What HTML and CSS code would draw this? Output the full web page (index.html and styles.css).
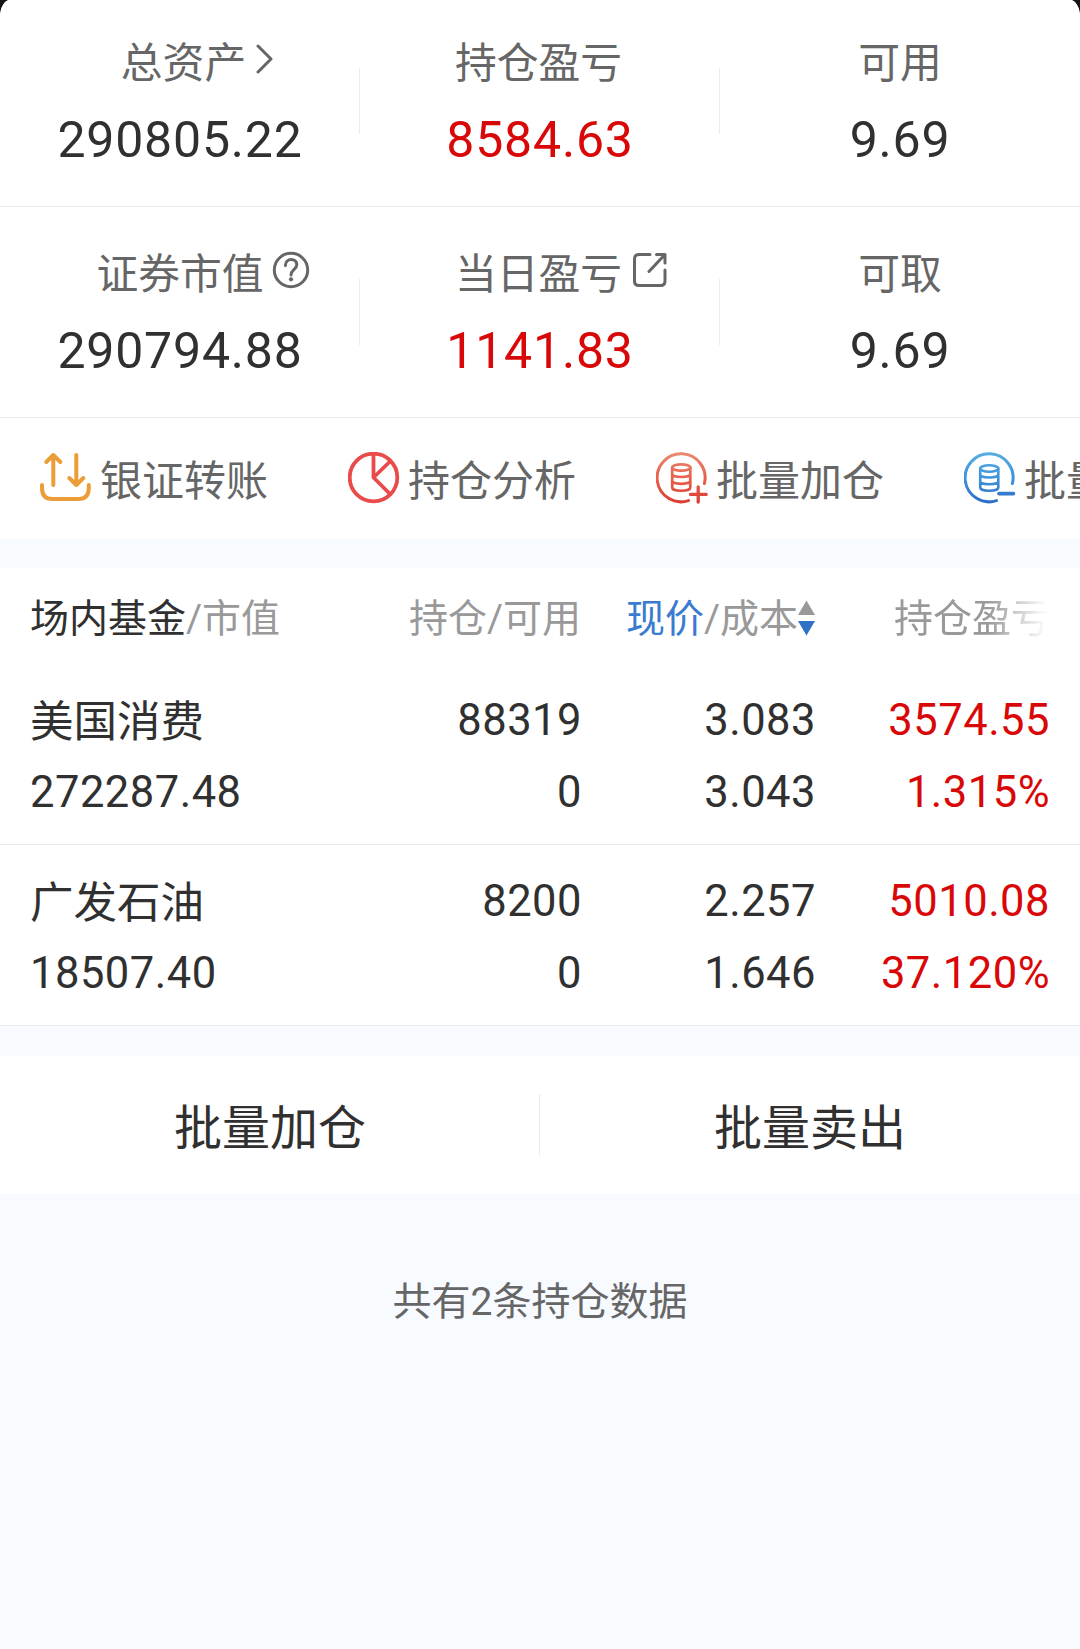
FILE: index.html
```
<!DOCTYPE html>
<html lang="zh-CN">
<head>
    <meta charset="UTF-8">
    <meta name="viewport" content="width=device-width, initial-scale=1.0">
    <title>持仓</title>
    <link rel="stylesheet" href="styles.css">
</head>
<body>

    <div class="page">

        <!-- Account summary -->
        <div class="summary">
            <div class="summary-row first">
                <div class="cell">
                    <div class="label label-total">总资产
                        <svg class="icon-chevron" width="18" height="30" viewBox="0 0 18 30"><path d="M2 2L15 15L2 28"/></svg>
                    </div>
                    <div class="value">290805.22</div>
                </div>
                <div class="cell">
                    <div class="label">持仓盈亏</div>
                    <div class="value red">8584.63</div>
                </div>
                <div class="cell">
                    <div class="label">可用</div>
                    <div class="value">9.69</div>
                </div>
            </div>
            <div class="summary-row">
                <div class="cell">
                    <div class="label">证券市值
                        <svg class="icon-help" width="38" height="38" viewBox="0 0 38 38">
                            <circle cx="19" cy="19" r="16.7"/>
                            <path d="M13.4 14.5C13.4 6.5 24.8 6.5 24.8 13.8C24.8 18.2 19 18.6 19 24"/>
                            <circle class="dot" cx="19" cy="28.3" r="2.1"/>
                        </svg>
                    </div>
                    <div class="value">290794.88</div>
                </div>
                <div class="cell">
                    <div class="label">当日盈亏
                        <svg class="icon-link" width="36" height="36" viewBox="0 0 36 36">
                            <path d="M18 2.5H7Q2.5 2.5 2.5 7V29Q2.5 33.5 7 33.5H28.5Q33 33.5 33 29V18"/>
                            <path d="M17 19.5L32.5 3M24.5 2.5H33V11"/>
                        </svg>
                    </div>
                    <div class="value red">1141.83</div>
                </div>
                <div class="cell">
                    <div class="label">可取</div>
                    <div class="value">9.69</div>
                </div>
            </div>
        </div>

        <!-- Shortcuts -->
        <div class="shortcuts">
            <div class="shortcut">
                <svg class="transfer" width="52" height="52" viewBox="0.7 0 52 52">
                    <path d="M14 3V33M7 10L14 3L21 10"/>
                    <path d="M37 3V33M30 26L37 33L44 26"/>
                    <path d="M2.7 33V36Q2.7 47 13 47H39Q49.5 47 49.5 36V33"/>
                </svg>
                <span>银证转账</span>
            </div>
            <div class="shortcut">
                <svg class="analysis" width="52" height="52" viewBox="0 0 52 52">
                    <circle cx="25.5" cy="25.5" r="23.8"/>
                    <path d="M25.5 2V25.5L42 42M25.5 25.5L42 9.5"/>
                </svg>
                <span>持仓分析</span>
            </div>
            <div class="shortcut">
                <svg width="52" height="52" viewBox="0 0 52 52" fill="none" stroke="url(#gradRed)" stroke-width="3" stroke-linecap="round">
                    <defs>
                        <linearGradient id="gradRed" gradientUnits="userSpaceOnUse" x1="0" y1="0" x2="0" y2="52">
                            <stop offset="0" stop-color="#e98a72"/>
                            <stop offset="0.5" stop-color="#e8604c"/>
                            <stop offset="1" stop-color="#d93c30"/>
                        </linearGradient>
                    </defs>
                    <path d="M48.4 31.5A24 24 0 1 0 32.5 48.6"/>
                    <path stroke-width="2.7" d="M16.2 15.5V35.5C16.2 39.8 34.3 39.8 34.3 35.5V15.5M16.2 22C16.2 26 34.3 26 34.3 22M16.2 28.8C16.2 32.8 34.3 32.8 34.3 28.8"/>
                    <ellipse stroke-width="2.7" cx="25.25" cy="15.5" rx="9.05" ry="3.2"/>
                    <path stroke-width="3.3" d="M42.2 34.8V50M34.5 42.4H50.2"/>
                </svg>
                <span>批量加仓</span>
            </div>
            <div class="shortcut">
                <svg width="52" height="52" viewBox="0 0 52 52" fill="none" stroke="url(#gradBlue)" stroke-width="3" stroke-linecap="round">
                    <defs>
                        <linearGradient id="gradBlue" gradientUnits="userSpaceOnUse" x1="0" y1="0" x2="0" y2="52">
                            <stop offset="0" stop-color="#55aee2"/>
                            <stop offset="0.5" stop-color="#3f92dc"/>
                            <stop offset="1" stop-color="#2c6cc6"/>
                        </linearGradient>
                    </defs>
                    <path d="M48.4 31.5A24 24 0 1 0 32.5 48.6"/>
                    <path stroke-width="2.6" d="M16.2 16.5V35.5C16.2 39.8 34.3 39.8 34.3 35.5V16.5M16.2 22.5C16.2 26.5 34.3 26.5 34.3 22.5M16.2 29.3C16.2 33.3 34.3 33.3 34.3 29.3"/>
                    <ellipse stroke-width="2.6" cx="25.25" cy="16.5" rx="9.05" ry="3.2"/>
                    <path stroke-width="3.8" d="M35 41.6L49.4 41.59"/>
                </svg>
                <span>批量卖出</span>
            </div>
        </div>

        <!-- Holdings -->
        <div class="holdings">
            <div class="table-head">
                <div class="col"><span class="dark">场内基金</span>/市值</div>
                <div class="col">持仓/可用</div>
                <div class="col sort">
                    <span class="blue">现价</span>/成本
                    <svg width="17" height="36" viewBox="0 0 17 36">
                        <path fill="#999999" d="M8.5 0.5L17 15H0Z"/>
                        <path fill="#2f72c4" d="M0 21H17L8.5 35.5Z"/>
                    </svg>
                </div>
                <div class="col fade">持仓盈亏</div>
            </div>
            <div class="holding">
                <div class="col"><p class="name">美国消费</p><p>272287.48</p></div>
                <div class="col"><p>88319</p><p>0</p></div>
                <div class="col"><p>3.083</p><p>3.043</p></div>
                <div class="col red"><p>3574.55</p><p>1.315%</p></div>
            </div>
            <div class="holding">
                <div class="col"><p class="name">广发石油</p><p>18507.40</p></div>
                <div class="col"><p>8200</p><p>0</p></div>
                <div class="col"><p>2.257</p><p>1.646</p></div>
                <div class="col red"><p>5010.08</p><p>37.120%</p></div>
            </div>
        </div>

        <!-- Batch buttons -->
        <div class="actions">
            <button class="btn">批量加仓</button>
            <button class="btn">批量卖出</button>
        </div>

        <p class="footer">共有2条持仓数据</p>

    </div>

</body>
</html>
```
FILE: styles.css
```
:root {
    --page-bg: #f7faff;
    --line: #ebebeb;
    --text: #303030;
    --label: #666666;
    --muted: #999999;
    --red: #d90808;
    --blue: #3a7bd0;
}

* {
    margin: 0;
    padding: 0;
    box-sizing: border-box;
    font-family: Roboto, "Noto Sans CJK SC", sans-serif;
}

body {
    background: #141414;
    overflow: hidden;
}

.page {
    width: 1080px;
    height: 1649px;
    background: var(--page-bg);
    border-radius: 10px 10px 0 0 / 17px 17px 0 0;
    overflow: hidden;
}

.red { color: var(--red); }
.dark { color: var(--text); }
.blue { color: var(--blue); }

/* Account summary */
.summary {
    background: white;
}

.summary-row {
    display: flex;
    height: 211px;
    padding-top: 38px;
    border-bottom: 1px solid var(--line);
}

.summary-row.first {
    height: 207px;
    padding-top: 34px;
}

.cell {
    position: relative;
    flex: 1;
    display: flex;
    flex-direction: column;
    align-items: center;
}

.cell + .cell::before {
    content: "";
    position: absolute;
    left: -1px;
    top: 34px;
    width: 1px;
    height: 66px;
    background: var(--line);
}

.label {
    position: relative;
    height: 60px;
    line-height: 60px;
    font-size: 41.8px;
    color: var(--label);
    white-space: nowrap;
}

.cell:nth-child(2) .label {
    margin-right: 3px;
}

.label-total {
    margin-left: 7px;
}

.label svg {
    position: absolute;
    left: 100%;
    fill: none;
    stroke: var(--label);
    stroke-width: 3;
    stroke-linecap: round;
    stroke-linejoin: round;
}

.label .icon-chevron { margin-left: 10px; top: 10px; }
.label .icon-help { margin-left: 8px; top: 6px; }
.label .icon-link { margin-left: 10px; top: 7px; }
.label .dot { fill: var(--label); stroke: none; }

.value {
    margin-top: 16px;
    line-height: 60px;
    font-size: 50px;
    letter-spacing: 0.8px;
}

.value:not(.red) { color: var(--text); }

/* Shortcuts */
.shortcuts {
    display: flex;
    align-items: center;
    gap: 78px;
    height: 121px;
    padding-left: 40px;
    padding-bottom: 2px;
    background: white;
    overflow: hidden;
}

.shortcut {
    display: flex;
    align-items: center;
    flex: none;
    width: 230px;
    gap: 8px;
    font-size: 42px;
    color: var(--label);
    white-space: nowrap;
}

.shortcut svg {
    flex: none;
}

.transfer, .analysis {
    fill: none;
    stroke-linecap: round;
    stroke-linejoin: round;
}

.transfer { stroke: #eb9d38; stroke-width: 4; }
.analysis { stroke: #e94b4b; stroke-width: 3.8; }

/* Holdings */
.holdings {
    margin-top: 29px;
    background: white;
}

.table-head, .holding {
    display: grid;
    grid-template-columns: 270px 281px 234px 235px;
    padding: 0 30px;
}

.table-head {
    height: 96px;
    padding-top: 3px;
    line-height: 96px;
    font-size: 39px;
    color: var(--muted);
    white-space: nowrap;
}

.col:not(:first-child) {
    text-align: right;
}

.sort {
    display: flex;
    align-items: center;
    justify-content: flex-end;
}

.sort svg {
    margin-bottom: 3px;
}

.table-head .fade {
    justify-self: end;
    -webkit-mask-image: linear-gradient(to right, #000 60%, transparent 98%);
    mask-image: linear-gradient(to right, #000 60%, transparent 98%);
}

.holding {
    grid-template-columns: 270px 282px 234px 234px;
    height: 181px;
    padding-top: 21px;
    border-bottom: 1px solid var(--line);
    font-size: 43.5px;
    letter-spacing: 0.5px;
    line-height: 72px;
}

.holding .col:not(.red) { color: var(--text); }

.holding .name {
    height: 72px;
    line-height: 75px;
    letter-spacing: 0;
}

/* Batch buttons */
.actions {
    display: flex;
    height: 138px;
    margin-top: 30px;
    background: white;
}

.btn {
    position: relative;
    flex: 1;
    padding-bottom: 2px;
    border: none;
    background: none;
    font-size: 48px;
    color: var(--text);
}

.btn + .btn::before {
    content: "";
    position: absolute;
    left: -1px;
    top: 38px;
    width: 1px;
    height: 61px;
    background: var(--line);
}

.footer {
    margin-top: 78px;
    text-align: center;
    line-height: 60px;
    font-size: 39px;
    color: var(--label);
}
```
